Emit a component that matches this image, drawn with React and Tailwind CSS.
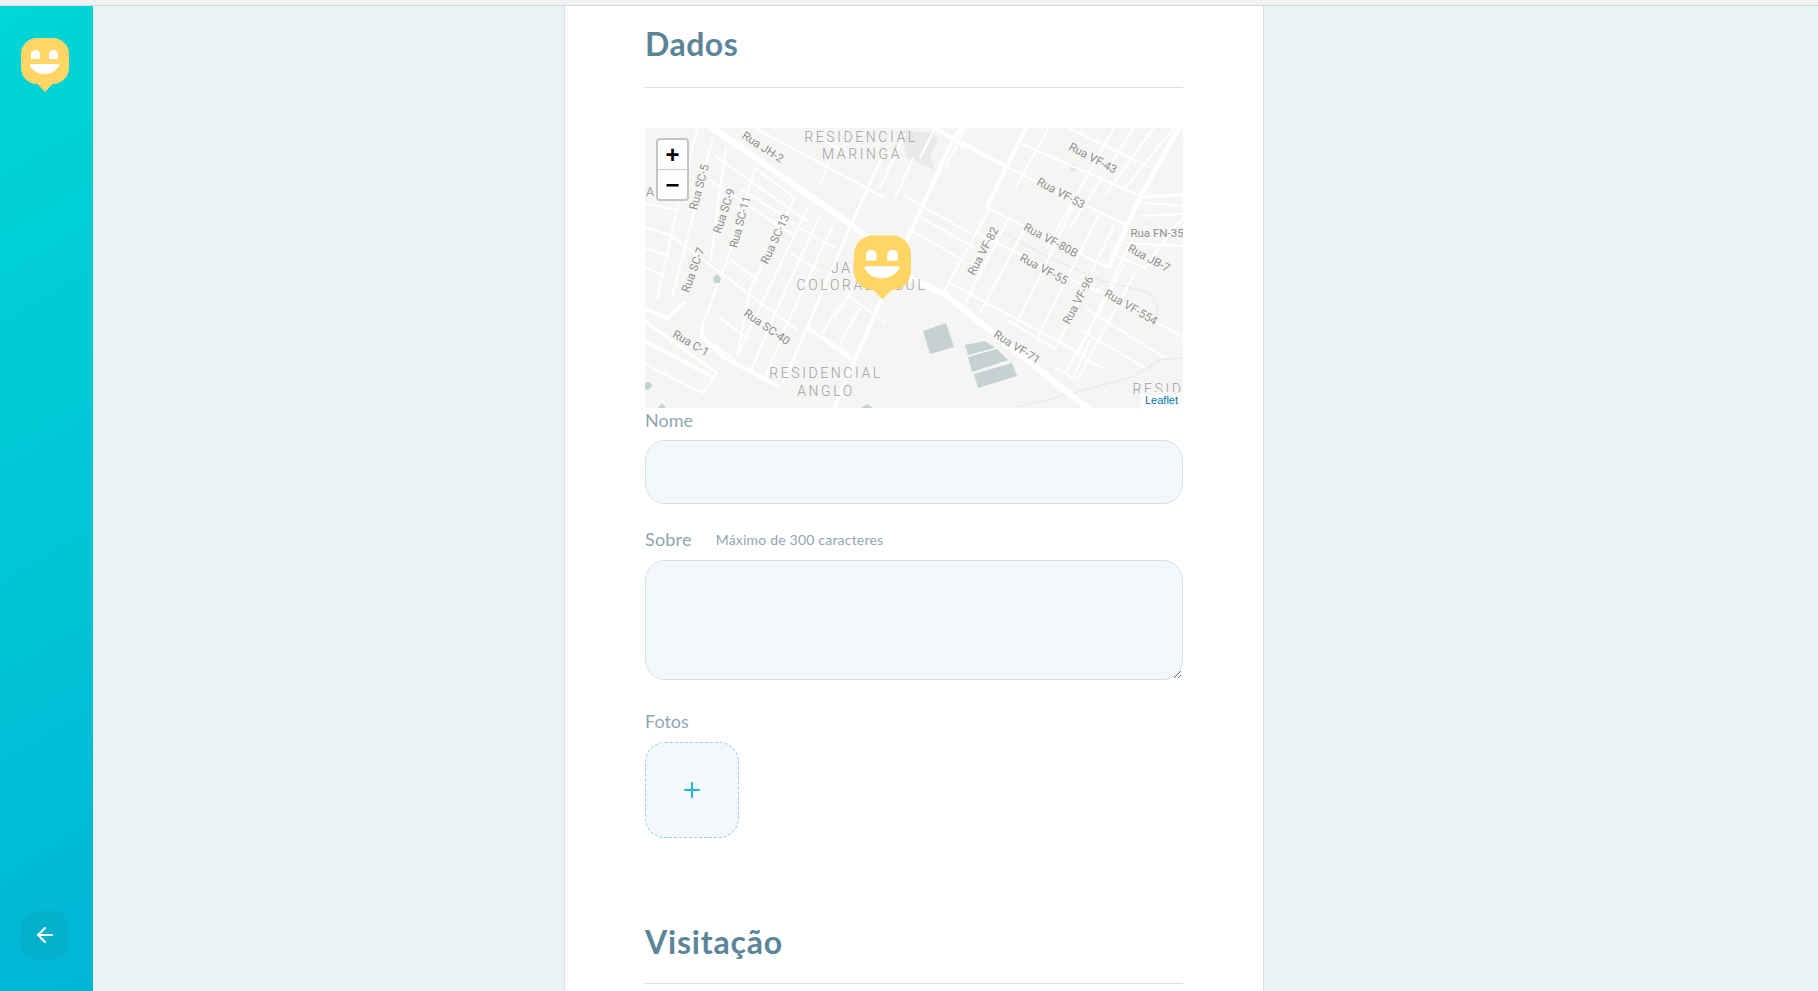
import React from 'react';
import { FiArrowLeft, FiPlus } from 'react-icons/fi';

const font = { fontFamily: 'Lato, "Noto Sans", sans-serif' };

function Logo({ className }) {
  return (
    <svg viewBox="0 0 48 54" className={className}>
      <path d="M16 0h16a16 16 0 0 1 16 16v14a16 16 0 0 1-16 16h-0.5L24 54l-7.5-8H16A16 16 0 0 1 0 30V16A16 16 0 0 1 16 0z" fill="#FFD666" />
      <path d="M10 21v-4.500a4.500 4.500 0 0 1 9 0V21zM28 21v-4.500a4.500 4.500 0 0 1 9 0V21z" fill="#fff" />
      <path d="M10.500 26h26c1.600 0 2.200 1 1.500 2-3 5-8 8-14.500 8S12 33 9 28c-0.700-1 0-2 1.500-2z" fill="#fff" />
    </svg>
  );
}

// [width, x1 y1 x2 y2 ...] in map pixels
const roads = [
  [6, '65,-2 218,105 268,152 298,165 445,282'],
  [4, '188,282 232,182 265,105 308,12 318,-2'],
  [3, '237,29 207,95 138,255'],
  [4, '382,-2 342,79'],
  [5, '535,-2 495,69 463,140'],
  [3, '495,69 540,67'],
  [4, '285,-2 362,39'],
  [2, '362,39 485,99'],
  [2, '342,80 462,139'],
  [4, '-2,180 22,190 40,174'],
  [3, '-2,192 72,245'],
  [4, '-2,212 68,249'],
  [4, '57,199 57,209 80,230 135,259'],
  [3, '163,200 207,232'],
  [2, '72,245 58,265'],
  [2, '-2,235 58,265'],
  [2, '53,-2 27,102 12,172'],
  [2, '68,9 27,170'],
  [2, '81,19 65,135'],
  [2, '110,40 88,115 57,199'],
  [2, '150,70 105,162 92,229'],
  [2, '163,79 117,175 92,229'],
  [2, '175,88 130,185 105,245'],
  [2, '188,97 143,194 120,250'],
  [2, '0,99 25,107 152,202'],
  [2, '0,75 30,82'],
  [2, '0,120 25,128'],
  [2, '0,140 20,148'],
  [2, '65,52 148,107'],
  [2, '70,28 165,95'],
  [2, '110,40 150,70'],
  [2, '85,132 113,152'],
  [2, '95,60 150,96'],
  [2, '145,125 175,143'],
  [2, '155,100 190,120'],
  [2, '75,190 105,212'],
  [2, '60,210 90,232'],
  [2, '110,0 240,70'],
  [2, '180,12 210,33'],
  [2, '175,58 185,30'],
  [2, '235,60 260,6'],
  [2, '250,70 268,30'],
  [2, '200,165 240,195'],
  [2, '190,190 208,160'],
  [2, '178,205 195,175'],
  [2, '195,215 215,180'],
  [2, '178,208 210,230'],
  [2, '260,68 330,108'],
  [2, '268,85 330,120'],
  [2, '262,100 318,132'],
  [2, '298,165 345,80'],
  [2, '320,175 365,88'],
  [2, '335,185 385,90'],
  [2, '372,195 430,75'],
  [2, '392,210 455,85'],
  [2, '412,218 470,95'],
  [2, '432,228 490,105'],
  [2, '305,155 440,228'],
  [2, '332,105 455,165'],
  [2, '362,192 412,222'],
  [2, '370,60 405,-2'],
  [2, '402,120 470,-2'],
  [2, '425,100 490,-2'],
  [2, '458,70 510,-2'],
  [2, '480,60 530,-2'],
  [2, '375,15 500,70'],
  [2, '420,-2 505,40'],
  [2, '465,125 500,140 520,112 538,90'],
  [2, '495,88 540,86'],
  [2, '500,75 540,78'],
  [2, '480,115 540,118'],
  [2, '420,245 462,170 480,135'],
  [2, '432,252 490,145'],
  [2, '410,240 428,250 445,212'],
  [2, '440,180 520,230'],
  [2, '433,200 500,240'],
  [2, '450,160 540,210'],
  [2, '440,232 458,240'],
  [2, '300,40 320,0'],
  [2, '275,30 290,0 320,20'],
];

const labels = [
  ['Rua JH-2', 118, 19, 33],
  ['Rua SC-5', 54, 59, -75],
  ['Rua SC-9', 79, 83, -72],
  ['Rua SC-11', 95, 94, -75],
  ['Rua SC-13', 130, 111, -65],
  ['Rua SC-7', 48, 142, -70],
  ['Rua SC-40', 122, 199, 35],
  ['Rua C-1', 46, 215, 30],
  ['Rua VF-43', 448, 30, 28],
  ['Rua VF-53', 416, 65, 28],
  ['Rua VF-80B', 406, 112, 28],
  ['Rua VF-82', 338, 123, -62],
  ['Rua VF-55', 399, 141, 28],
  ['Rua VF-96', 433, 172, -62],
  ['Rua VF-554', 486, 179, 30],
  ['Rua VF-71', 372, 219, 32],
  ['Rua FN-35', 512, 105, 0],
  ['Rua JB-7', 504, 130, 28],
];

const places = [
  ['RESIDENCIAL', 216, 14],
  ['MARINGÁ', 217, 31],
  ['JARDIM', 219, 145],
  ['COLORADO SUL', 217, 162],
  ['RESIDENCIAL', 181, 250],
  ['ANGLO', 181, 268],
  ['RESID', 513, 266],
];

const buildings = [
  '278,203 301,195 309,219 285,226',
  '320,217 340,213 350,220 323,227',
  '323,229 352,221 363,232 327,244',
  '329,246 367,235 372,248 333,260',
  '68,150 72,146 76,150 75,155 69,155',
  '0,255 5,254 7,258 3,262 0,261',
  '13,280 17,275 21,280',
  '216,280 222,276 228,280',
];

function MapView() {
  return (
    <div className="relative h-[280px] w-full overflow-hidden bg-[#f5f5f4]">
      <svg viewBox="0 0 538 280" className="block h-full w-full">
        <path d="M255 2 288 5 293 12 285 29 290 42 262 30z" fill="#e9ebeb" />
        <path d="M425 36h6v7h-6z" fill="#e5e7e7" />
        <path d="M355 102 395 125 455 152 505 165 513 182 508 199" fill="none" stroke="#e6e6e6" strokeWidth="1" />
        <path d="M372 279 402 272 488 249 515 232 538 230" fill="none" stroke="#e6e6e6" strokeWidth="1" />
        {roads.map(([w, pts], i) => (
          <polyline key={i} points={pts} fill="none" stroke="#ffffff" strokeWidth={w} strokeLinejoin="round" strokeLinecap="butt" />
        ))}
        {buildings.map((pts) => (
          <polygon key={pts} points={pts} fill="#c6d1d1" />
        ))}
        <text x="5" y="68" textAnchor="middle" className="fill-[#a3a3a3] text-[13px]" style={{ fontFamily: 'Roboto, sans-serif' }}>A</text>
        {places.map(([t, x, y], i) => (
          <text
            key={i}
            x={x}
            y={y}
            textAnchor="middle"
            className="fill-[#a0a0a0] text-[14px] font-light tracking-[2.6px]"
            style={{ fontFamily: 'Roboto, sans-serif' }}
          >
            {t}
          </text>
        ))}
        {labels.map(([t, x, y, r]) => (
          <text
            key={t}
            x={x}
            y={y + 4}
            textAnchor="middle"
            transform={`rotate(${r} ${x} ${y})`}
            className="fill-[#8f8f8f] text-[11.5px]"
            style={{ fontFamily: 'Roboto, sans-serif' }}
          >
            {t}
          </text>
        ))}
      </svg>

      <div className="absolute left-[11px] top-[10px] flex w-[33px] flex-col overflow-hidden rounded-[4px] border-2 border-[#c4c4c4] bg-white">
        <a className="flex h-[30px] items-center justify-center border-b border-[#cccccc] text-[24px] font-bold leading-none text-black" style={{ fontFamily: '"Liberation Sans", sans-serif' }}>+</a>
        <a className="flex h-[29px] items-center justify-center text-[24px] font-bold leading-none text-black" style={{ fontFamily: '"Liberation Sans", sans-serif' }}>−</a>
      </div>

      <div className="absolute left-[209px] top-[107px]">
        <Logo className="block h-[65px] w-[57px]" />
      </div>

      <div className="absolute bottom-0 right-0 bg-white/70 px-[5px] text-[11px] leading-[16px] text-[#0078A8]" style={{ fontFamily: '"Liberation Sans", sans-serif' }}>
        Leaflet
      </div>
    </div>
  );
}

export default function App() {
  return (
    <div className="flex h-[991px] flex-col overflow-hidden bg-[#ebf2f5]" style={font}>
      <div className="h-[6px] shrink-0 border-b border-[#d3d8dc] bg-[#f2f2f2]" />
      <div className="flex min-h-0 flex-1">
        <aside className="flex w-[93px] shrink-0 flex-col items-center justify-between bg-[linear-gradient(329.54deg,#00b6d6_0%,#00d6d6_100%)] pb-[32px] pr-[3px] pt-[32px]">
          <Logo className="block h-[54px] w-[48px]" />
          <button className="flex h-12 w-12 items-center justify-center rounded-2xl bg-[#05b0cc] text-white">
            <FiArrowLeft size={24} />
          </button>
        </aside>

        <main className="ml-[471px] w-[700px] shrink-0 border-x border-[#d3e2e5] bg-white px-[80px]">
          <h2 className="mt-[18px] border-b border-[#d3e2e5] pb-[23px] text-[32px] font-bold leading-[40px] tracking-[0.5px] text-[#5c8599]">Dados</h2>

          <div className="mt-[40px]">
            <MapView />
          </div>

          <label className="block pb-[4px] text-[18px] leading-[24px] text-[#8fa7b3]">Nome</label>
          <input className="mt-[4px] block h-[64px] w-full rounded-[20px] border border-[#d3e2e5] bg-[#f5f8fa]" />

          <div className="mt-[23px] flex h-[24px] items-center">
            <span className="text-[18px] leading-[24px] tracking-[0.2px] text-[#8fa7b3]">Sobre</span>
            <span className="ml-[24px] text-[14px] tracking-[0.2px] text-[#8fa7b3]">Máximo de 300 caracteres</span>
          </div>
          <textarea className="mt-[9px] block h-[120px] w-full rounded-[20px] border border-[#d3e2e5] bg-[#f5f8fa]" />

          <label className="mt-[29px] block text-[18px] leading-[24px] text-[#8fa7b3]">Fotos</label>
          <div className="mt-[9px] flex h-[96px] w-[94px] items-center justify-center rounded-[20px] border border-dashed border-[#96d2f0] bg-[#f5f8fa] text-[#15b6d6]">
            <FiPlus size={24} />
          </div>

          <h2 className="mt-[84px] border-b border-[#d3e2e5] pb-[21px] text-[32px] font-bold leading-[40px] tracking-[0.8px] text-[#5c8599]">Visitação</h2>
        </main>
      </div>
    </div>
  );
}
